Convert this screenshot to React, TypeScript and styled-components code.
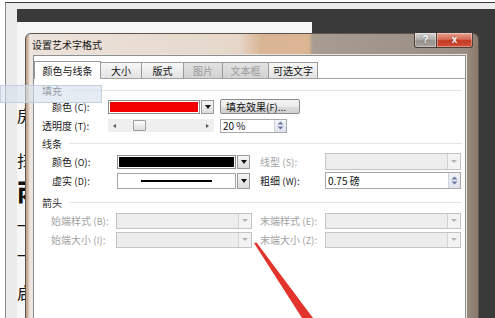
import React from "react";
import styled, { createGlobalStyle } from "styled-components";

const GlobalStyle = createGlobalStyle`
  html, body { margin: 0; padding: 0; background: #fff; }
  body { font-family: "Noto Sans CJK SC", "Liberation Sans", sans-serif; overflow: hidden; }
`;

const Screen = styled.div`
  position: relative;
  width: 495px;
  height: 318px;
  overflow: hidden;
  background: #fff;
  padding: 2px 0 0 5px;
  box-sizing: border-box;
`;

const AppWindow = styled.div`
  height: 100%;
  box-sizing: border-box;
  border-top: 1px solid #3c3c3c;
  border-left: 1px solid #8a8a8a;
  background: #ebebeb;
  padding-top: 6px;
  display: flex;
  flex-direction: column;
`;

const Workspace = styled.div`
  flex: 1;
  display: grid;
  grid-template-columns: 11px 1fr;
`;

const Canvas = styled.div`
  background: #3a3a3a;
  padding-top: 13px;
  display: flex;
`;

const Page = styled.div`
  width: 295px;
  background: #f6f6f6;
  display: flex;
  flex-direction: column;
`;

const DocChar = styled.div<{ $mt: number; $size: number; $bold?: boolean }>`
  margin-top: ${p => p.$mt}px;
  font-size: ${p => p.$size}px;
  line-height: ${p => p.$size}px;
  font-weight: ${p => (p.$bold ? 900 : 400)};
  color: #111;
`;

/* dialog */

const Dialog = styled.div`
  position: absolute;
  left: 25px;
  top: 33px;
  width: 454px;
  height: 300px;
  box-sizing: border-box;
  border: 1px solid #5d534b;
  border-radius: 6px 6px 0 0;
  background:
    linear-gradient(90deg, #b89e88 0, #cdb6a3 2px, #efe9e4 4px, rgba(239, 233, 228, 0) 6px),
    linear-gradient(
      90deg,
      #ece3dc 0%,
      #e6d7ca 47%,
      #d9b596 52%,
      #dcb594 62.5%,
      #a89b90 63.5%,
      #9a8e84 97%,
      #8a7a6c 100%
    );
  display: flex;
  flex-direction: column;
`;

const TitleBar = styled.div`
  height: 21px;
  display: flex;
  align-items: flex-start;
  padding: 0 5px 0 6px;
`;

const TitleText = styled.span`
  font-size: 10px;
  line-height: 21px;
  color: #151515;
`;

const CaptionButtons = styled.div`
  margin-left: auto;
  margin-top: -1px;
  display: flex;
`;

const CapBtn = styled.div<{ $w: number; $close?: boolean }>`
  width: ${p => p.$w}px;
  height: 15px;
  box-sizing: border-box;
  border: 1px solid #4e3f37;
  border-top: none;
  margin-left: ${p => (p.$close ? -1 : 0)}px;
  border-radius: ${p => (p.$close ? "0 0 3px 0" : "0 0 0 3px")};
  background: ${p =>
    p.$close
      ? "linear-gradient(#eba293, #d56a55 45%, #c23a22 55%, #d5513a)"
      : "linear-gradient(#d9d6d3, #b3aeaa 45%, #96918d 55%, #a8a39f)"};
  box-shadow: inset 0 0 0 1px rgba(255, 255, 255, 0.35);
  color: #fff;
  font-family: "Liberation Sans", sans-serif;
  font-weight: bold;
  font-size: 10px;
  line-height: 14px;
  text-align: center;
  text-shadow: 0 0 2px rgba(0, 0, 0, 0.5);
`;

const Client = styled.div`
  flex: 1;
  margin: 0 12px 0 7px;
  background: #fff;
  border: 1px solid #8e8e8e;
  box-shadow: 0 0 0 1px #e9e4df;
  padding-top: 5px;
  display: flex;
  flex-direction: column;
`;

const TabStrip = styled.div`
  height: 17px;
  display: flex;
  align-items: flex-end;
`;

const Tab = styled.div<{ $w: number; $active?: boolean; $disabled?: boolean }>`
  position: relative;
  z-index: ${p => (p.$active ? 1 : 0)};
  width: ${p => p.$w}px;
  height: ${p => (p.$active ? 18 : 16)}px;
  margin-bottom: ${p => (p.$active ? -1 : 0)}px;
  margin-right: -1px;
  box-sizing: border-box;
  border: 1px solid #9a9a9a;
  border-bottom: none;
  background: ${p =>
    p.$active
      ? "#fff"
      : p.$disabled
      ? "linear-gradient(#e2e2e2, #d2d2d2)"
      : "linear-gradient(#f8f8f8, #e2e2e2)"};
  color: ${p => (p.$disabled ? "#9b9b9b" : "#111")};
  font-size: 10px;
  display: flex;
  align-items: center;
  justify-content: center;
`;

const Panel = styled.div`
  flex: 1;
  border-top: 1px solid #a3a3a3;
  background: #fff;
  padding: 4px 3px 0 0;
  display: flex;
  flex-direction: column;
`;

const Section = styled.div<{ $mt: number }>`
  display: flex;
  align-items: center;
  gap: 7px;
  height: 14px;
  margin-top: ${p => p.$mt}px;
  padding-left: 8px;
  font-size: 10px;
  color: #2a2a2a;
  &::after {
    content: "";
    flex: 1;
    height: 1px;
    background: #e4e4e4;
  }
`;

const Row = styled.div<{ $indent: number; $mt?: number }>`
  display: flex;
  align-items: center;
  height: 19px;
  margin-top: ${p => p.$mt || 0}px;
  padding-left: ${p => p.$indent}px;
`;

const Label = styled.span<{ $w: number; $ml?: number; $disabled?: boolean }>`
  width: ${p => p.$w}px;
  flex-shrink: 0;
  margin-left: ${p => p.$ml || 0}px;
  font-size: 10px;
  white-space: nowrap;
  color: ${p => (p.$disabled ? "#a2a2a2" : "#1a1a1a")};
  u { text-decoration: none; font-size: 9px; }
`;

const Combo = styled.div<{ $w: number; $h: number; $ml?: number }>`
  width: ${p => p.$w}px;
  height: ${p => p.$h}px;
  margin-left: ${p => p.$ml || 0}px;
  flex-shrink: 0;
  display: flex;
`;

const Swatch = styled.div<{ $color: string }>`
  flex: 1;
  box-sizing: border-box;
  border: 1px solid #8f8f8f;
  background: ${p => p.$color};
  box-shadow: inset 0 0 0 1px #fff;
`;

const LineBox = styled.div`
  flex: 1;
  box-sizing: border-box;
  border: 1px solid #a5a5a5;
  background: #fff;
  padding: 0 23px;
  display: flex;
  align-items: center;
  &::after {
    content: "";
    flex: 1;
    height: 2px;
    background: #000;
  }
`;

const DropBtn = styled.div`
  width: 13px;
  margin-left: 1px;
  box-sizing: border-box;
  border: 1px solid #9b9b9b;
  background: linear-gradient(#f6f6f6, #dcdcdc);
  display: flex;
  align-items: center;
  justify-content: center;
  &::after {
    content: "";
    border-left: 3px solid transparent;
    border-right: 3px solid transparent;
    border-top: 4px solid #111;
  }
`;

const DisabledCombo = styled.div<{ $w: number; $h: number; $ml?: number }>`
  width: ${p => p.$w}px;
  height: ${p => p.$h}px;
  margin-left: ${p => p.$ml || 0}px;
  flex-shrink: 0;
  box-sizing: border-box;
  border: 1px solid #c4c4c4;
  background: #ededed;
  display: flex;
  justify-content: flex-end;
`;

const DisabledArrow = styled.div`
  width: 12px;
  border-left: 1px solid #d2d2d2;
  background: #f3f3f3;
  display: flex;
  align-items: center;
  justify-content: center;
  &::after {
    content: "";
    border-left: 3px solid transparent;
    border-right: 3px solid transparent;
    border-top: 3px solid #b3b3b3;
  }
`;

const PushButton = styled.div<{ $w: number; $ml: number }>`
  width: ${p => p.$w}px;
  height: 15px;
  margin-left: ${p => p.$ml}px;
  box-sizing: border-box;
  border: 1px solid #8b8b8b;
  border-radius: 2px;
  background: linear-gradient(#f4f4f4 0%, #ebebeb 50%, #dddddd 51%, #d0d0d0 100%);
  font-size: 10px;
  line-height: 13px;
  padding-left: 5px;
  white-space: nowrap;
  color: #111;
  u { text-decoration: none; font-size: 9px; }
`;

const Slider = styled.div<{ $w: number }>`
  width: ${p => p.$w}px;
  height: 13px;
  flex-shrink: 0;
  background: #efefef;
  display: flex;
  align-items: center;
  padding: 0 5px;
  box-sizing: border-box;
`;

const SlideArrow = styled.span<{ $dir: "left" | "right" }>`
  width: 0;
  height: 0;
  border-top: 2px solid transparent;
  border-bottom: 2px solid transparent;
  ${p => (p.$dir === "left" ? "border-right: 3px solid #555;" : "border-left: 3px solid #555; margin-left: auto;")}
`;

const Thumb = styled.span`
  width: 13px;
  height: 11px;
  margin-left: 17px;
  box-sizing: border-box;
  border: 1px solid #9d9d9d;
  border-radius: 1px;
  background: linear-gradient(#fbfbfb, #dedede);
`;

const Field = styled.div<{ $w: number; $h: number; $ml: number }>`
  width: ${p => p.$w}px;
  height: ${p => p.$h}px;
  margin-left: ${p => p.$ml}px;
  flex-shrink: 0;
  box-sizing: border-box;
  border: 1px solid #a9a9a9;
  background: #fff;
  display: flex;
  align-items: center;
  font-size: 10px;
  color: #111;
  padding-left: 2px;
`;

const SpinBox = styled.div`
  margin-left: auto;
  width: 12px;
  height: 100%;
  box-sizing: border-box;
  border-left: 1px solid #cfd3dc;
  background: linear-gradient(#f1f3f8, #dfe3ec);
  display: flex;
  align-items: center;
  justify-content: center;
`;

const Veil = styled.div`
  position: absolute;
  left: 0;
  top: 85px;
  width: 102px;
  height: 18px;
  box-sizing: border-box;
  background: rgba(214, 225, 238, 0.62);
  border: 1px solid rgba(190, 205, 224, 0.9);
`;

const Annotation = styled.svg`
  position: absolute;
  left: 0;
  top: 0;
  pointer-events: none;
`;

const Spinner = () => (
  <SpinBox>
    <svg width="7" height="9" viewBox="0 0 7 9">
      <path d="M3.5 0.5 L6.5 3.5 L0.5 3.5 Z" fill="#6a79a6" />
      <path d="M0.5 5.5 L6.5 5.5 L3.5 8.5 Z" fill="#6a79a6" />
    </svg>
  </SpinBox>
);

const tabs = [
  { label: "颜色与线条", w: 67, active: true },
  { label: "大小", w: 42 },
  { label: "版式", w: 43 },
  { label: "图片", w: 40, disabled: true },
  { label: "文本框", w: 47, disabled: true },
  { label: "可选文字", w: 50 },
];

export default function App() {
  return (
    <>
      <GlobalStyle />
      <Screen>
        <AppWindow>
          <Workspace>
            <div />
            <Canvas>
              <Page>
                <DocChar $mt={85} $size={16}>房</DocChar>
                <DocChar $mt={29} $size={16}>扫</DocChar>
                <DocChar $mt={11} $size={24} $bold>丙</DocChar>
                <DocChar $mt={15} $size={14}>一</DocChar>
                <DocChar $mt={16} $size={14}>一</DocChar>
                <DocChar $mt={22} $size={16}>启</DocChar>
              </Page>
            </Canvas>
          </Workspace>
        </AppWindow>

        <Dialog>
          <TitleBar>
            <TitleText>设置艺术字格式</TitleText>
            <CaptionButtons>
              <CapBtn $w={23}>?</CapBtn>
              <CapBtn $w={37} $close>x</CapBtn>
            </CaptionButtons>
          </TitleBar>
          <Client>
            <TabStrip>
              {tabs.map(t => (
                <Tab key={t.label} $w={t.w} $active={t.active} $disabled={t.disabled}>
                  {t.label}
                </Tab>
              ))}
            </TabStrip>
            <Panel>
              <Section $mt={0}>填充</Section>
              <Row $indent={18}>
                <Label $w={56}>颜色 (<u>C</u>):</Label>
                <Combo $w={106} $h={14}>
                  <Swatch $color="#f20000" />
                  <DropBtn />
                </Combo>
                <PushButton $w={80} $ml={6}>填充效果(<u>F</u>)...</PushButton>
              </Row>
              <Row $indent={8}>
                <Label $w={66}>透明度 (<u>T</u>):</Label>
                <Slider $w={106}>
                  <SlideArrow $dir="left" />
                  <Thumb />
                  <SlideArrow $dir="right" />
                </Slider>
                <Field $w={67} $h={14} $ml={6}>
                  20 %
                  <Spinner />
                </Field>
              </Row>

              <Section $mt={1}>线条</Section>
              <Row $indent={18} $mt={2}>
                <Label $w={65}>颜色 (<u>O</u>):</Label>
                <Combo $w={133} $h={14}>
                  <Swatch $color="#000" />
                  <DropBtn />
                </Combo>
                <Label $w={65} $ml={10} $disabled>线型 (<u>S</u>):</Label>
                <DisabledCombo $w={136} $h={17}>
                  <DisabledArrow />
                </DisabledCombo>
              </Row>
              <Row $indent={18}>
                <Label $w={65}>虚实 (<u>D</u>):</Label>
                <Combo $w={133} $h={16}>
                  <LineBox />
                  <DropBtn />
                </Combo>
                <Label $w={65} $ml={10}>粗细 (<u>W</u>):</Label>
                <Field $w={136} $h={17} $ml={0}>
                  0.75 磅
                  <Spinner />
                </Field>
              </Row>

              <Section $mt={5}>箭头</Section>
              <Row $indent={17} $mt={2}>
                <Label $w={65} $disabled>始端样式 (<u>B</u>):</Label>
                <DisabledCombo $w={136} $h={16}>
                  <DisabledArrow />
                </DisabledCombo>
                <Label $w={65} $ml={8} $disabled>末端样式 (<u>E</u>):</Label>
                <DisabledCombo $w={136} $h={16}>
                  <DisabledArrow />
                </DisabledCombo>
              </Row>
              <Row $indent={17}>
                <Label $w={65} $disabled>始端大小 (<u>I</u>):</Label>
                <DisabledCombo $w={136} $h={16}>
                  <DisabledArrow />
                </DisabledCombo>
                <Label $w={65} $ml={8} $disabled>末端大小 (<u>Z</u>):</Label>
                <DisabledCombo $w={136} $h={16}>
                  <DisabledArrow />
                </DisabledCombo>
              </Row>
            </Panel>
          </Client>
        </Dialog>

        <Veil />
        <Annotation width="495" height="318" viewBox="0 0 495 318">
          <polygon points="254,243 256.5,242.5 313,318 302,318" fill="#e2342c" />
        </Annotation>
      </Screen>
    </>
  );
}
